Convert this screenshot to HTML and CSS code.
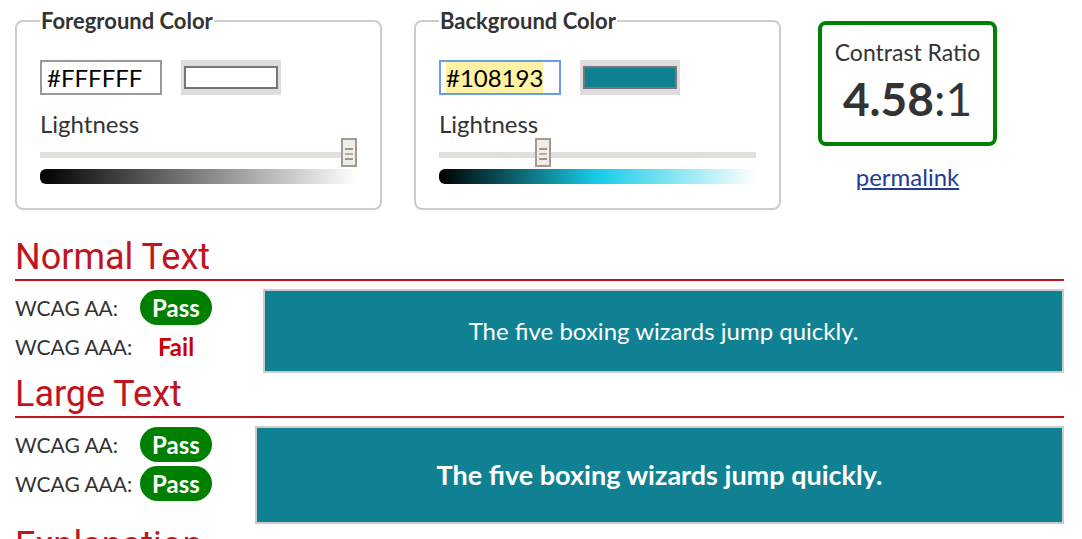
FILE: index.html
```html
<!DOCTYPE html>
<html lang="en">
<head>
    <meta charset="UTF-8">
    <meta name="viewport" content="width=device-width, initial-scale=1.0">
    <title>Contrast Checker</title>
    <link rel="stylesheet" href="styles.css">
</head>
<body>
<div class="page">

  <div class="pickers">
    <fieldset class="picker">
      <legend>Foreground Color</legend>
      <div class="hex-row">
        <div class="hex-field"><span>#FFFFFF</span></div>
        <div class="swatch"><div class="swatch-fill fg"></div></div>
      </div>
      <label class="lightness">Lightness</label>
      <input type="range" min="0" max="100" value="100" class="slider">
      <div class="ramp ramp-fg"></div>
    </fieldset>

    <fieldset class="picker">
      <legend>Background Color</legend>
      <div class="hex-row">
        <div class="hex-field focused"><mark>#108193</mark></div>
        <div class="swatch"><div class="swatch-fill bg"></div></div>
      </div>
      <label class="lightness">Lightness</label>
      <input type="range" min="0" max="100" value="32" class="slider">
      <div class="ramp ramp-bg"></div>
    </fieldset>

    <div class="ratio-col">
      <div class="ratio-box">
        <div class="ratio-title">Contrast Ratio</div>
        <div class="ratio-value"><b>4.58</b>:1</div>
      </div>
      <a href="#" class="permalink">permalink</a>
    </div>
  </div>

  <h2 class="section first">Normal Text</h2>
  <div class="result">
    <div class="grades">
      <div class="grade"><span class="grade-label">WCAG AA:</span><span class="badge pass">Pass</span></div>
      <div class="grade"><span class="grade-label">WCAG AAA:</span><span class="badge fail">Fail</span></div>
    </div>
    <div class="sample sample-normal">The five boxing wizards jump quickly.</div>
  </div>

  <h2 class="section">Large Text</h2>
  <div class="result">
    <div class="grades">
      <div class="grade"><span class="grade-label">WCAG AA:</span><span class="badge pass">Pass</span></div>
      <div class="grade"><span class="grade-label">WCAG AAA:</span><span class="badge pass">Pass</span></div>
    </div>
    <div class="sample sample-large">The five boxing wizards jump quickly.</div>
  </div>

  <h2 class="section">Explanation</h2>

</div>
</body>
</html>
```

FILE: styles.css
```css
body {
  margin: 0;
  font-family: Lato, "Noto Sans", sans-serif;
  font-size: 24px;
  color: #333;
  background: #fff;
}

.page {
  padding: 8px 18px 0 15px;
}

/* colour pickers + ratio */
.pickers {
  display: flex;
  align-items: flex-start;
}

.picker {
  width: 367px;
  box-sizing: border-box;
  margin: 0 32px 0 0;
  padding: 0 23px 24px;
  border: 2px solid #ccc;
  border-radius: 8px;
}

.picker legend {
  padding: 0 1px;
  font-size: 22px;
  font-weight: bold;
  line-height: 1.2;
}

.hex-row {
  display: flex;
  gap: 19px;
  margin-top: 26px;
}

.hex-field {
  width: 122px;
  height: 35px;
  box-sizing: border-box;
  border: 2px solid #999;
  padding: 0 5px;
  display: flex;
  align-items: stretch;
  line-height: 31px;
  color: #000;
}

.hex-field.focused {
  border-color: #6b9ee8;
}

.hex-field mark {
  background: #fff3a3;
  color: #000;
}

.swatch {
  width: 100px;
  height: 35px;
  box-sizing: border-box;
  padding: 6px 3px;
  background: #ddd;
}

.swatch-fill {
  height: 100%;
  box-sizing: border-box;
  border: 2px solid #777;
}

.swatch-fill.fg { background: #fff; }
.swatch-fill.bg { background: #108193; }

.lightness {
  display: block;
  margin-top: 14px;
  line-height: 29px;
}

/* lightness slider */
.slider {
  -webkit-appearance: none;
  appearance: none;
  display: block;
  width: 100%;
  height: 29px;
  margin: 1px 0 0;
  background: transparent;
  outline: none;
}

.slider::-webkit-slider-runnable-track {
  height: 6px;
  margin-top: 3px;
  background: #e2ded8;
}

.slider::-webkit-slider-thumb {
  -webkit-appearance: none;
  appearance: none;
  width: 16px;
  height: 29px;
  margin-top: -14px;
  box-sizing: border-box;
  border: 2px solid #a19b93;
  background:
    linear-gradient(#9a948c, #9a948c) 50% 8px / 8px 2px no-repeat,
    linear-gradient(#b3aea7, #b3aea7) 50% 13px / 8px 2px no-repeat,
    linear-gradient(#9a948c, #9a948c) 50% 18px / 8px 2px no-repeat,
    #f0ede9;
}

.ramp {
  height: 15px;
  margin-top: 1px;
  border-radius: 6px 0 0 6px;
}

.ramp-fg {
  background: linear-gradient(to right, #000, #fff);
}

.ramp-bg {
  background: linear-gradient(to right, #000 0%, #108193 32%, hsl(188, 82%, 50%) 50%, #fff 100%);
}

.ratio-col {
  margin: 13px 0 0 5px;
  width: 179px;
  text-align: center;
}

.ratio-box {
  border: 4px solid #008000;
  border-radius: 8px;
  padding: 13px 0 19px;
}

.ratio-title {
  font-size: 23px;
  line-height: 29px;
}

.ratio-value {
  margin-top: 8px;
  font-size: 46px;
  line-height: 48px;
}

.permalink {
  display: inline-block;
  margin-top: 16px;
  color: #213d93;
  line-height: 29px;
}

/* results */
.section {
  margin: 0;
  padding-bottom: 1px;
  border-bottom: 2px solid #c0151f;
  font-family: Roboto, sans-serif;
  font-size: 36px;
  font-weight: normal;
  line-height: 42px;
  color: #c0151f;
}

.section.first {
  margin-top: 26px;
}

.result {
  display: flex;
  align-items: flex-start;
  margin-top: 8px;
}

.grades {
  width: 197px;
  flex: none;
  padding-top: 1px;
}

.grade {
  display: flex;
  align-items: center;
  height: 35px;
  margin-bottom: 4px;
}

.grade-label {
  width: 125px;
  font-size: 21px;
  white-space: nowrap;
}

.badge {
  width: 72px;
  line-height: 35px;
  border-radius: 18px;
  text-align: center;
  font-weight: bold;
}

.badge.pass {
  background: #008000;
  color: #fff;
}

.badge.fail {
  color: #c00;
}

.sample {
  flex: 1;
  border: 2px solid #ccc;
  background: #108193;
  color: #fff;
  text-align: center;
}

.sample-normal {
  margin-left: 51px;
  line-height: 80px;
}

.sample-large {
  margin-left: 43px;
  line-height: 94px;
  font-size: 27px;
  font-weight: bold;
}
```
